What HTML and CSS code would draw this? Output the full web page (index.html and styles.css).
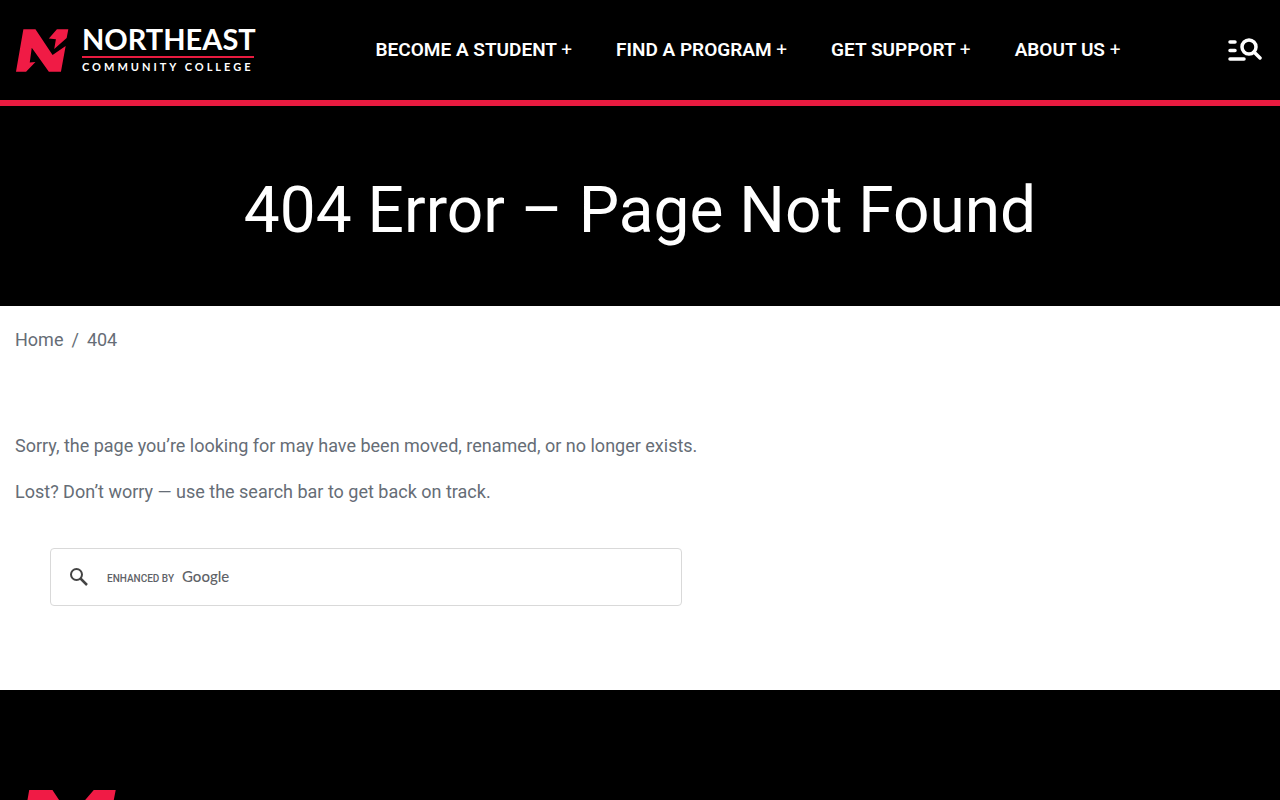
FILE: index.html
```html
<!DOCTYPE html>
<html lang="en">
<head>
    <meta charset="UTF-8">
    <meta name="viewport" content="width=device-width, initial-scale=1.0">
    <title>404 Error – Page Not Found | Northeast Community College</title>
    <link rel="stylesheet" href="styles.css">
</head>
<body>

    <!-- HEADER -->
    <header class="site-header">
        <a href="#" class="logo">
            <svg class="logo-mark" viewBox="20 27 158 127" aria-hidden="true">
                <path d="M42 27H78L129 104L168 77L154 154H118L67 82L61 126L78 125L50 154H20Z"/>
                <path d="M142 27H176L171 53L134 86L139 57L118 55Z"/>
            </svg>
            <span class="logo-text">
                <span class="logo-name">NORTHEAST</span>
                <span class="logo-sub">COMMUNITY COLLEGE</span>
            </span>
        </a>
        <nav class="main-nav">
            <a href="#">BECOME A STUDENT <span class="plus">+</span></a>
            <a href="#">FIND A PROGRAM <span class="plus">+</span></a>
            <a href="#">GET SUPPORT <span class="plus">+</span></a>
            <a href="#">ABOUT US <span class="plus">+</span></a>
        </nav>
        <button class="menu-button" aria-label="Menu and search">
            <svg width="34" height="24" viewBox="0 0 34 24" fill="none" stroke="#fff" stroke-width="3.500" stroke-linecap="round" aria-hidden="true">
                <path d="M2 4H7M2 12.500H7M2 21H16"/>
                <circle cx="21" cy="9" r="7"/>
                <path d="M26 14L32 20"/>
            </svg>
        </button>
    </header>

    <!-- PAGE TITLE -->
    <div class="page-title">
        <h1>404 Error – Page Not Found</h1>
    </div>

    <!-- CONTENT -->
    <main class="content">
        <nav class="breadcrumb" aria-label="Breadcrumb">
            <a href="#">Home</a>
            <span>/</span>
            <span>404</span>
        </nav>

        <p>Sorry, the page you’re looking for may have been moved, renamed, or no longer exists.</p>
        <p>Lost? Don’t worry — use the search bar to get back on track.</p>

        <form class="search-box">
            <button type="button" class="search-button" aria-label="Search">
                <svg width="18" height="18" viewBox="0 0 18 18" fill="none" stroke="#444" stroke-width="2" aria-hidden="true">
                    <circle cx="6.500" cy="6.500" r="5.500"/>
                    <path d="M10.500 10.500L17 17" stroke-width="2.500"/>
                </svg>
            </button>
            <label for="search" class="search-label">ENHANCED BY <span class="google">Google</span></label>
            <input type="text" id="search" class="search-input">
        </form>
    </main>

    <!-- FOOTER -->
    <footer class="site-footer">
        <svg class="footer-mark" viewBox="20 27 158 127" aria-hidden="true">
            <path d="M42 27H78L129 104L168 77L154 154H118L67 82L61 126L78 125L50 154H20Z"/>
            <path d="M142 27H176L171 53L134 86L139 57L118 55Z"/>
        </svg>
    </footer>

</body>
</html>
```
FILE: styles.css
```css
* {
    box-sizing: border-box;
}
body {
    font-family: Roboto, Arial, sans-serif;
    font-size: 18px;
    line-height: 28px;
    margin: 0;
    color: #666d76;
    background-color: white;
}
a {
    color: inherit;
    text-decoration: none;
}
button {
    background: none;
    border: none;
    padding: 0;
    cursor: pointer;
}
svg {
    display: block;
}
.site-header {
    display: flex;
    align-items: center;
    justify-content: space-between;
    height: 106px;
    padding: 0 18px 0 16px;
    background-color: black;
    border-bottom: 6px solid #e91b40;
}
.logo {
    display: flex;
    align-items: center;
    gap: 13px;
    color: white;
}
.logo-mark {
    width: 53px;
    height: 43px;
}
.logo-mark, .footer-mark {
    fill: #f01b45;
}
.logo-text {
    display: flex;
    flex-direction: column;
    width: 172px;
    font-family: Lato, sans-serif;
    font-weight: bold;
}
.logo-name {
    padding-bottom: 2px;
    font-size: 29px;
    line-height: 30px;
    white-space: nowrap;
    border-bottom: 2px solid #e91b40;
}
.logo-sub {
    font-size: 11px;
    line-height: 18px;
    letter-spacing: 3px;
    white-space: nowrap;
}
.main-nav {
    display: flex;
    gap: 44px;
    padding-left: 14px;
    color: white;
    font-size: 19px;
    font-weight: 600;
    white-space: nowrap;
}
.plus {
    font-weight: normal;
}
.page-title {
    padding: 65px 15px 55px;
    background-color: black;
    color: white;
    text-align: center;
}
h1 {
    margin: 0;
    font-size: 64px;
    font-weight: normal;
    line-height: 80px;
}
.content {
    padding: 20px 15px 84px;
}
.content p {
    margin: 0 0 18px;
}
.breadcrumb {
    display: flex;
    gap: 8px;
    margin-bottom: 78px;
}
.search-box {
    display: flex;
    align-items: center;
    width: calc(50% + 7px);
    max-width: 632px;
    height: 58px;
    margin: 42px 0 0 35px;
    padding: 0 19px;
    border: 1px solid #d9d9d9;
    border-radius: 4px;
}
.search-label {
    display: flex;
    align-items: baseline;
    gap: 8px;
    margin-left: 19px;
    color: #5f6368;
    font-size: 10px;
    font-weight: 500;
    white-space: nowrap;
}
.google {
    font-family: Lato, sans-serif;
    font-size: 15px;
}
.search-input {
    flex: 1;
    min-width: 0;
    height: 40px;
    border: none;
    outline: none;
    background: none;
    font-size: 16px;
}
.site-footer {
    padding: 100px 15px;
    background-color: black;
}
.footer-mark {
    width: 102px;
    height: 82px;
}
```
